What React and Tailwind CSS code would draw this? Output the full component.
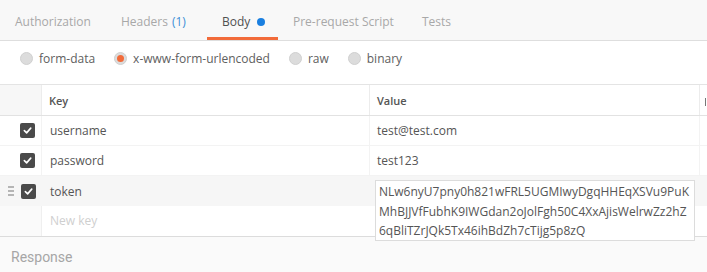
import React from 'react';

const tabs = [
  { label: 'Authorization', w: 'w-[106px]' },
  { label: 'Headers', count: '(1)', w: 'w-[101px]' },
  { label: 'Body', active: true, dot: true, w: 'w-[71px]' },
  { label: 'Pre-request Script', w: 'w-[129px]' },
  { label: 'Tests', w: 'w-[60px]' },
];

const modes = [
  { label: 'form-data' },
  { label: 'x-www-form-urlencoded', checked: true },
  { label: 'raw' },
  { label: 'binary' },
];

const rows = [
  { key: 'username', value: 'test@test.com' },
  { key: 'password', value: 'test123' },
];

const token =
  'NLw6nyU7pny0h821wFRL5UGMIwyDgqHHEqXSVu9PuKMhBJJVfFubhK9IWGdan2oJolFgh50C4XxAjisWelrwZz2hZ6qBliTZrJQk5Tx46ihBdZh7cTijg5p8zQ';

const Check = () => (
  <div className="w-[15px] h-[15px] rounded-[2px] bg-[#4a4a4a] flex items-center justify-center">
    <svg width="9" height="9" viewBox="0 0 10 10">
      <path d="M1.5 5.2 L4 7.6 L8.6 2.4" fill="none" stroke="#fff" strokeWidth="1.8" strokeLinecap="round" strokeLinejoin="round" />
    </svg>
  </div>
);

const Radio = ({ checked }) => (
  <div className="w-[13px] h-[13px] rounded-full bg-[#dcdcdc] border border-[#d0d0d0] flex items-center justify-center">
    {checked && <div className="w-[7px] h-[7px] rounded-full bg-[#f26b3a]" />}
  </div>
);

export default function App() {
  return (
    <div className="w-[707px] h-[272px] overflow-hidden bg-white text-[12px] font-['Open_Sans',sans-serif]">
      {/* tabs */}
      <div className="flex h-[41px] bg-[#f8f8f8] border-b border-[#dedede]">
        {tabs.map((t) => (
          <div
            key={t.label}
            className={`flex items-center gap-[7px] pl-[15px] pt-[6px] h-full border-b-[3px] ${t.w} ${
              t.active ? 'border-[#f26b3a] text-[#505050]' : 'border-transparent text-[#a8a8a8]'
            }`}
          >
            <span className="whitespace-nowrap">
              {t.label}
              {t.count && <span className="text-[#3c8fd6] ml-[4px]">{t.count}</span>}
            </span>
            {t.dot && <span className="w-[8px] h-[8px] rounded-full bg-[#1a7fe0]" />}
          </div>
        ))}
      </div>

      {/* body modes */}
      <div className="flex items-start h-[43px] pl-[20px] pt-[9px] gap-[19px] text-[#606060]">
        {modes.map((m) => (
          <div key={m.label} className="flex items-center gap-[6px] h-[17px]">
            <Radio checked={m.checked} />
            <span>{m.label}</span>
          </div>
        ))}
      </div>

      {/* table */}
      <div className="border-t border-[#e4e4e4]">
        <div className="grid grid-cols-[42px_328px_330px_1fr] h-[31px] border-b border-[#e2e2e2] text-[11px] font-semibold text-[#555]">
          <div className="bg-[#f7f7f7] border-r border-[#ececec]" />
          <div className="flex items-center pl-[7px] pt-[3px] border-r border-[#ececec]">Key</div>
          <div className="flex items-center pl-[7px] pt-[3px] border-r border-[#ececec]">Value</div>
          <div className="flex items-center pl-[5px] pt-[3px]">
            <div className="w-[1px] h-[8px] bg-[#777]" />
          </div>
        </div>

        {rows.map((r) => (
          <div key={r.key} className="grid grid-cols-[42px_328px_330px_1fr] h-[30px] border-b border-[#f3f3f3] text-[#555]">
            <div className="flex items-center justify-end pr-[6px] border-r border-[#f3f3f3]">
              <Check />
            </div>
            <div className="flex items-center pl-[8px] pt-[1px] border-r border-[#f3f3f3]">{r.key}</div>
            <div className="flex items-center pl-[7px] pt-[1px] border-r border-[#f3f3f3]">{r.value}</div>
            <div />
          </div>
        ))}

        <div className="grid grid-cols-[42px_328px_330px_1fr] h-[30px] bg-[#f6f6f6] text-[#555]">
          <div className="flex items-center justify-between pl-[8px] pr-[6px]">
            <div className="flex flex-col gap-[2px]">
              <div className="w-[6px] h-[2px] bg-[#b5b5b5]" />
              <div className="w-[6px] h-[2px] bg-[#b5b5b5]" />
              <div className="w-[6px] h-[2px] bg-[#b5b5b5]" />
            </div>
            <Check />
          </div>
          <div className="flex items-center pl-[8px] pt-[1px]">token</div>
          <div className="relative">
            <div className="absolute left-[5px] top-[4px] z-10 w-[320px] h-[61px] bg-white border border-[#dcdcdc] px-[3px] pt-[1px] leading-[19.5px] text-[#555] break-all">
              {token}
            </div>
          </div>
          <div />
        </div>

        <div className="grid grid-cols-[42px_328px_330px_1fr] h-[31px] border-b border-[#dcdcdc]">
          <div className="bg-[#fafafa] border-r border-[#efefef]" />
          <div className="flex items-center pl-[8px] text-[#cfcfcf]">New key</div>
          <div />
          <div />
        </div>
      </div>

      {/* response */}
      <div className="h-[40px] bg-[#fafafa] flex items-center pl-[11px] text-[14px] text-[#a6a6a6] font-['Roboto',sans-serif]">
        Response
      </div>
    </div>
  );
}
